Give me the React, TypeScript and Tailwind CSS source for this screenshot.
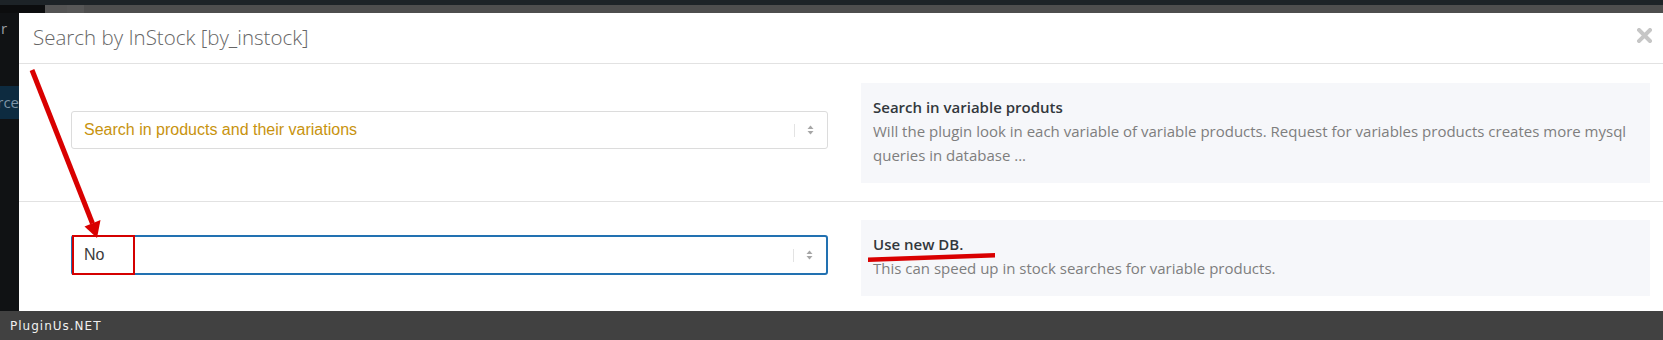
import React from "react";

function SelectArrows() {
  return (
    <div className="flex items-center h-full">
      <div className="w-px h-[13px] bg-[#e3e3e3]" />
      <svg width="7" height="10" viewBox="0 0 7 10" className="ml-[12px] mr-[13px]">
        <path d="M3.5 0.5 L6.5 4 L0.5 4 Z" fill="#a6a6a6" />
        <path d="M3.5 9.5 L6.5 6 L0.5 6 Z" fill="#a6a6a6" />
      </svg>
    </div>
  );
}

export default function App() {
  return (
    <div className="relative w-[1663px] h-[340px] overflow-hidden flex flex-col bg-[#4f4f4f]">
      <div className="h-[5px] bg-[#1d2327] shrink-0" />
      <div className="h-[8px] flex shrink-0">
        <div className="w-[45px] bg-[#0c0d0e]" />
        <div className="w-[22px] bg-[#545454]" />
        <div className="w-[17px] bg-[#575757]" />
        <div className="flex-1 bg-[#4e4e4e]" />
      </div>
      <div className="flex flex-1 min-h-0">
        {/* left admin strip */}
        <div className="w-[19px] shrink-0 bg-[#101214] flex flex-col overflow-hidden">
          <div className="h-[73px] pt-[5px] pl-[1px] text-[15px] leading-[20px] text-[#9a9ea3] font-['Open_Sans',sans-serif]">
            r
          </div>
          <div className="h-[33px] bg-[#0d2b40] flex items-center justify-end text-[15px] text-[#7d93a6] font-['Open_Sans',sans-serif] whitespace-nowrap overflow-hidden">
            rce
          </div>
          <div className="flex-1" />
        </div>

        {/* modal */}
        <div className="flex-1 bg-white flex flex-col min-w-0">
          <div className="h-[51px] shrink-0 border-b border-[#e2e2e2] flex items-center justify-between pl-[14px]">
            <div className="text-[20.5px] font-light text-[#666] font-['Open_Sans',sans-serif] leading-none -mt-[2px]">
              Search by InStock [by_instock]
            </div>
            <svg width="15" height="15" viewBox="0 0 15 15" className="mr-[11px] -mt-[5px]">
              <path d="M2 2 L13 13 M13 2 L2 13" stroke="#c6c6c6" strokeWidth="4" strokeLinecap="square" />
            </svg>
          </div>

          {/* row 1 */}
          <div className="shrink-0 border-b border-[#e2e2e2] flex items-start pl-[52px] pr-[13px] pt-[19px] pb-[18px]">
            <div className="w-[757px] shrink-0 mt-[28px] h-[38px] border border-[#dcdcdc] rounded-[3px] flex items-center justify-between">
              <span className="pl-[12px] text-[16px] text-[#c8930e] font-['Liberation_Sans',Arial,sans-serif]">
                Search in products and their variations
              </span>
              <SelectArrows />
            </div>
            <div className="ml-[33px] flex-1 bg-[#f6f7fa] px-[12px] pt-[12px] pb-[16px] text-[15px] leading-[24px] font-['Open_Sans',sans-serif]">
              <div className="font-semibold text-[#32373c]">Search in variable produts</div>
              <div className="text-[#7e7e7e]">
                Will the plugin look in each variable of variable products. Request for variables products creates more mysql queries in database ...
              </div>
            </div>
          </div>

          {/* row 2 */}
          <div className="flex items-start pl-[52px] pr-[13px] pt-[18px]">
            <div className="w-[757px] shrink-0 mt-[15px] h-[40px] border-2 border-[#2271b1] rounded-[3px] flex items-center justify-between relative">
              <span className="pl-[11px] text-[16px] text-[#3c3c3c] font-['Liberation_Sans',Arial,sans-serif]">No</span>
              <SelectArrows />
              <div className="absolute left-[-1px] top-[-2px] w-[63px] h-[40px] border-2 border-[#d40000]" />
            </div>
            <div className="ml-[33px] flex-1 bg-[#f6f7fa] px-[12px] pt-[12px] pb-[16px] text-[15px] leading-[24px] font-['Open_Sans',sans-serif]">
              <div className="font-semibold text-[#32373c]">Use new DB.</div>
              <div className="text-[#7e7e7e]">This can speed up in stock searches for variable products.</div>
            </div>
          </div>
        </div>
      </div>

      {/* footer */}
      <div className="h-[29px] shrink-0 bg-[#414141] flex items-center pl-[10px]">
        <span className="text-[12px] tracking-[1px] text-[#f0f0f0] font-['DejaVu_Sans',sans-serif]">PluginUs.NET</span>
      </div>

      {/* annotations */}
      <svg className="absolute inset-0 pointer-events-none" width="1663" height="340" viewBox="0 0 1663 340">
        <line x1="32" y1="70" x2="92.5" y2="223.5" stroke="#d90000" strokeWidth="5" />
        <polygon points="97,238 100.5,220 84.5,226.5" fill="#d90000" />
        <polygon points="868,257.5 995,253 995,257.5 868,262" fill="#d90000" />
      </svg>
    </div>
  );
}
